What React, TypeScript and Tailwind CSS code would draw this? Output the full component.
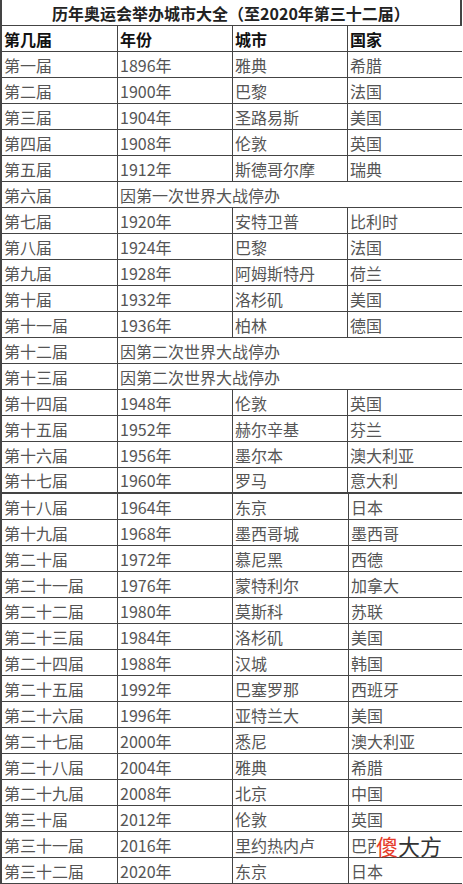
import React from 'react'

type Row = [string, string, string?, string?]

const upper: Row[] = [
  ['第一届', '1896年', '雅典', '希腊'],
  ['第二届', '1900年', '巴黎', '法国'],
  ['第三届', '1904年', '圣路易斯', '美国'],
  ['第四届', '1908年', '伦敦', '英国'],
  ['第五届', '1912年', '斯德哥尔摩', '瑞典'],
  ['第六届', '因第一次世界大战停办'],
  ['第七届', '1920年', '安特卫普', '比利时'],
  ['第八届', '1924年', '巴黎', '法国'],
  ['第九届', '1928年', '阿姆斯特丹', '荷兰'],
  ['第十届', '1932年', '洛杉矶', '美国'],
  ['第十一届', '1936年', '柏林', '德国'],
  ['第十二届', '因第二次世界大战停办'],
  ['第十三届', '因第二次世界大战停办'],
  ['第十四届', '1948年', '伦敦', '英国'],
  ['第十五届', '1952年', '赫尔辛基', '芬兰'],
  ['第十六届', '1956年', '墨尔本', '澳大利亚'],
  ['第十七届', '1960年', '罗马', '意大利'],
]

const lower: Row[] = [
  ['第十八届', '1964年', '东京', '日本'],
  ['第十九届', '1968年', '墨西哥城', '墨西哥'],
  ['第二十届', '1972年', '慕尼黑', '西德'],
  ['第二十一届', '1976年', '蒙特利尔', '加拿大'],
  ['第二十二届', '1980年', '莫斯科', '苏联'],
  ['第二十三届', '1984年', '洛杉矶', '美国'],
  ['第二十四届', '1988年', '汉城', '韩国'],
  ['第二十五届', '1992年', '巴塞罗那', '西班牙'],
  ['第二十六届', '1996年', '亚特兰大', '美国'],
  ['第二十七届', '2000年', '悉尼', '澳大利亚'],
  ['第二十八届', '2004年', '雅典', '希腊'],
  ['第二十九届', '2008年', '北京', '中国'],
  ['第三十届', '2012年', '伦敦', '英国'],
  ['第三十一届', '2016年', '里约热内卢', '巴西'],
  ['第三十二届', '2020年', '东京', '日本'],
]

const cell = 'flex items-center pl-[2px] border-r border-[#444] whitespace-nowrap overflow-hidden'

function TableRow({ row, lowerPart, last }: { row: Row; lowerPart?: boolean; last?: boolean }) {
  const cols = lowerPart ? 'grid-cols-[116px_115px_116px_115px]' : 'grid-cols-[116px_115px_115px_116px]'
  const border = last ? 'border-b-2' : 'border-b'
  if (row.length === 2) {
    return (
      <div className={`grid ${cols} h-[26px] ${border} border-[#444]`}>
        <div className={cell}>{row[0]}</div>
        <div className={`${cell} col-span-3`}>{row[1]}</div>
      </div>
    )
  }
  return (
    <div className={`grid ${cols} h-[26px] ${border} border-[#444]`}>
      {row.map((c, i) => (
        <div key={i} className={cell}>
          {c}
        </div>
      ))}
    </div>
  )
}

export default function App() {
  return (
    <div
      className="bg-white w-[463px] h-[884px] overflow-hidden text-[16px] leading-none text-[#555]"
      style={{ fontFamily: '"Microsoft YaHei", "Noto Sans CJK SC", sans-serif' }}
    >
      <div className="relative w-[462px] border-l-2 border-[#444]">
        {/* Title */}
        <div className="h-[26px] flex items-center justify-center font-bold text-[#222] border-b border-r-2 border-[#444]">
          历年奥运会举办城市大全（至2020年第三十二届）
        </div>

        {/* Header */}
        <div className="grid grid-cols-[116px_115px_115px_116px] h-[26px] border-b border-[#444] font-bold text-[#111]">
          <div className={cell}>第几届</div>
          <div className={cell}>年份</div>
          <div className={cell}>城市</div>
          <div className={cell}>国家</div>
        </div>

        {upper.map((r, i) => (
          <TableRow key={r[0]} row={r} last={i === upper.length - 1} />
        ))}
        {lower.map((r) => (
          <TableRow key={r[0]} row={r} lowerPart />
        ))}

        {/* Watermark */}
        <div className="absolute left-[374px] top-[833px] h-[24px] pr-[2px] bg-white flex items-center text-[22px] leading-none">
          <span className="text-[#e63b2a]">傻</span>
          <span className="text-[#333]">大方</span>
        </div>
      </div>
    </div>
  )
}
